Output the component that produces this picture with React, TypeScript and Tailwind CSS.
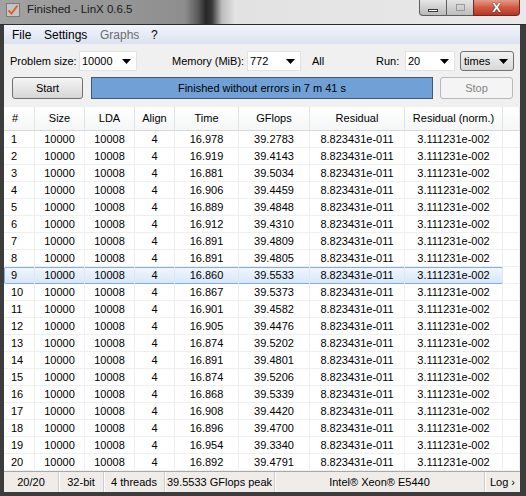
import React from "react";

const runs: [string, string][] = [
  ["16.978", "39.2783"],
  ["16.919", "39.4143"],
  ["16.881", "39.5034"],
  ["16.906", "39.4459"],
  ["16.889", "39.4848"],
  ["16.912", "39.4310"],
  ["16.891", "39.4809"],
  ["16.891", "39.4805"],
  ["16.860", "39.5533"],
  ["16.867", "39.5373"],
  ["16.901", "39.4582"],
  ["16.905", "39.4476"],
  ["16.874", "39.5202"],
  ["16.891", "39.4801"],
  ["16.874", "39.5206"],
  ["16.868", "39.5339"],
  ["16.908", "39.4420"],
  ["16.896", "39.4700"],
  ["16.954", "39.3340"],
  ["16.892", "39.4791"],
];

const cols = "grid grid-cols-[31px_50px_50px_40px_64px_71px_95px_98px]";
const headers = ["#", "Size", "LDA", "Align", "Time", "GFlops", "Residual", "Residual (norm.)"];

function Arrow() {
  return (
    <svg width="9" height="5" viewBox="0 0 9 5" className="shrink-0">
      <path d="M0 0h9L4.5 5z" fill="#000" />
    </svg>
  );
}

function Combo({ value, width }: { value: string; width: string }) {
  return (
    <div
      className={`${width} h-[20px] bg-white border border-[#e3e3e3] flex items-center justify-between pl-[2px] pr-[5px]`}
    >
      <span>{value}</span>
      <Arrow />
    </div>
  );
}

function TitleBar() {
  return (
    <div className="h-[25px] flex items-start bg-[linear-gradient(90deg,#a2a2a2_0px,#8e8e8e_185px,#5a5a5a_198px,#262626_206px,#3a3a3a_212px,#bdbdbd_222px,#e2e2e2_235px,#e9e9e9_100%)] border-b border-[#2c2c2c]">
      <div className="mt-[3px] ml-[6px] w-[14px] h-[14px] border border-[#7a7a7a] bg-[#c4c4c4] flex items-center justify-center">
        <svg width="12" height="12" viewBox="0 0 12 12">
          <path d="M1.5 6.5l3 3 6-8" fill="none" stroke="#d9602f" strokeWidth="2" />
        </svg>
      </div>
      <span className="ml-[7px] mt-[4px] text-[11.5px] text-[#1a1a1a] leading-none">Finished - LinX 0.6.5</span>
      <div className="ml-auto mr-[6px] flex h-[16px]">
        <div className="w-[28px] border border-[#5e5e5e] border-t-0 rounded-bl-[4px] bg-linear-to-b from-[#e6e6e6] to-[#b9b9b9] flex items-end justify-center pb-[3px]">
          <div className="w-[10px] h-[3px] bg-white border border-[#3a3a3a]" />
        </div>
        <div className="w-[26px] border-b border-[#5e5e5e] bg-linear-to-b from-[#e4e4e4] to-[#bdbdbd] flex items-center justify-center">
          <div className="w-[9px] h-[7px] border border-[#9a9a9a]" />
        </div>
        <div className="w-[47px] border border-[#6a2b22] border-t-0 rounded-br-[4px] bg-linear-to-b from-[#e59a88] via-[#cf5a44] to-[#b8341e] flex items-center justify-center">
          <span className="text-white font-bold text-[13px] leading-none [text-shadow:0_0_1px_#333,0_0_1px_#333]">X</span>
        </div>
      </div>
    </div>
  );
}

export default function App() {
  return (
    <div className="w-[526px] h-[496px] bg-[#3c3c3c] flex flex-col overflow-hidden font-['Liberation_Sans',Arial,sans-serif] text-[11px] text-black">
      <TitleBar />
      <div className="flex-1 flex pl-[4px] pr-[6px] pb-[4px] min-h-0">
        <div className="w-[516px] flex flex-col bg-[#f0f0f0]">
          {/* Menu */}
          <div className="h-[19px] shrink-0 flex items-center bg-linear-to-b from-[#f3f5fb] to-[#dbe1f1] text-[12px] pl-[8px]">
            <span className="w-[32px]">File</span>
            <span className="w-[56px]">Settings</span>
            <span className="w-[51px] text-[#6d6d6d]">Graphs</span>
            <span>?</span>
          </div>

          {/* Toolbar */}
          <div className="h-[63px] shrink-0 flex flex-col pt-[7px] pl-[6px] gap-[6px]">
            <div className="h-[20px] flex items-center">
              <span className="w-[69px]">Problem size:</span>
              <Combo value="10000" width="w-[58px]" />
              <span className="w-[35px]" />
              <span className="w-[75px]">Memory (MiB):</span>
              <Combo value="772" width="w-[54px]" />
              <span className="w-[11px]" />
              <span className="w-[64px]">All</span>
              <span className="w-[29px]">Run:</span>
              <Combo value="20" width="w-[50px]" />
              <span className="w-[5px]" />
              <div className="w-[54px] h-[20px] rounded-[3px] border border-[#707070] bg-linear-to-b from-[#f2f2f2] to-[#d8d8d8] flex items-center justify-between pl-[3px] pr-[5px]">
                <span>times</span>
                <Arrow />
              </div>
            </div>
            <div className="h-[22px] flex items-center pl-[2px]">
              <div className="w-[71px] h-[22px] rounded-[3px] border border-[#707070] bg-linear-to-b from-[#f4f4f4] via-[#e6e6e6] to-[#d6d6d6] flex items-center justify-center">
                Start
              </div>
              <div className="ml-[8px] w-[342px] h-[22px] border border-[#3d5877] bg-[#70a0d6] flex items-center justify-center">
                Finished without errors in 7 m 41 s
              </div>
              <div className="ml-[7px] w-[73px] h-[22px] rounded-[3px] border border-[#b5b9bc] bg-[#f4f4f4] text-[#858585] flex items-center justify-center">
                Stop
              </div>
            </div>
          </div>

          {/* Table */}
          <div className="flex-1 min-h-0 bg-white flex flex-col">
            <div className="h-[24px] shrink-0 flex border-b border-[#d8d8d8] bg-linear-to-b from-white to-[#f5f6f7]">
              <div className={cols}>
                {headers.map((h, i) => (
                  <div
                    key={h}
                    className={`h-[23px] flex items-center border-r border-[#e3e4e6] ${i === 0 ? "pl-[8px]" : "justify-center"}`}
                  >
                    {h}
                  </div>
                ))}
              </div>
              <div className="flex-1 border-r border-[#e3e4e6]" />
            </div>
            {runs.map(([time, gf], i) => {
              const selected = i === 8;
              const cells = [String(i + 1), "10000", "10008", "4", time, gf, "8.823431e-011", "3.111231e-002"];
              return (
                <div key={i} className="h-[17px] shrink-0 flex">
                  <div
                    className={`${cols} ${
                      selected
                        ? "shadow-[inset_0_0_0_1px_#84acdd] rounded-[2px] bg-linear-to-b from-[#f1f7fe] to-[#d5e6fa]"
                        : "border-b border-[#efefef]"
                    }`}
                  >
                    {cells.map((c, j) => (
                      <div
                        key={j}
                        className={`flex items-center border-r ${selected ? "border-[#dce7f5]" : "border-[#efefef]"} ${
                          j === 0 ? "pl-[7px]" : "justify-center"
                        }`}
                      >
                        {c}
                      </div>
                    ))}
                  </div>
                  <div className="flex-1 border-b border-r border-[#efefef]" />
                </div>
              );
            })}
          </div>

          {/* Status bar */}
          <div className="h-[21px] shrink-0 flex items-stretch border-t border-[#a9a9a9] bg-[#efecea]">
            {[
              ["w-[55px]", "20/20"],
              ["w-[45px]", "32-bit"],
              ["w-[61px]", "4 threads"],
              ["w-[110px]", "39.5533 GFlops peak"],
              ["w-[210px]", "Intel® Xeon® E5440"],
            ].map(([w, t]) => (
              <div key={t} className={`${w} flex items-center justify-center whitespace-nowrap border-r border-[#cfcccb] shadow-[1px_0_0_#fff]`}>
                {t}
              </div>
            ))}
            <div className="flex-1 flex items-center justify-center">Log ›</div>
          </div>
        </div>
      </div>
    </div>
  );
}
